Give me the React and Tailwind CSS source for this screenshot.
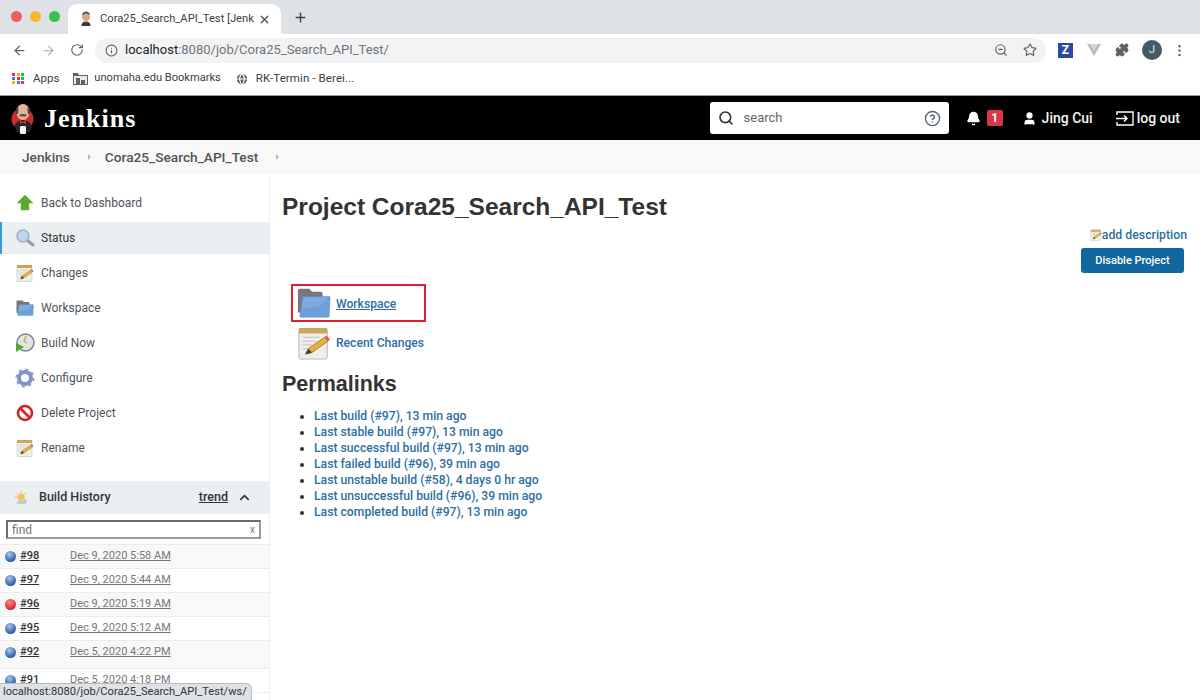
import React from 'react';
import { ArrowLeft, ArrowRight, RotateCw, Info, ZoomOut, Star, Puzzle, MoreVertical, Plus, X, Search, CircleHelp, Bell, User, ChevronUp, Globe } from 'lucide-react';

const FolderIcon = ({ size = 18 }) => (
  <svg width={size} height={size} viewBox="0 0 36 32">
    <path d="M1 3q0-2 2-2h10l3 3h9q2 0 2 2v20H1z" fill="#77777d" />
    <path d="M6 10q0-1 1-1h27q1 0 1 1l-1 20q0 1-1 1H4q-1 0-1-1z" fill="#6e9fd8" stroke="#5b8cc6" strokeWidth=".6" />
    <path d="M7 10h26l-8 9-20 3z" fill="#7fabdf" />
  </svg>
);

const NotepadIcon = ({ size = 18 }) => (
  <svg width={size} height={size} viewBox="0 0 36 36">
    <rect x="2" y="3" width="30" height="32" rx="2" fill="#efefea" stroke="#b5b5ac" />
    <rect x="2" y="2" width="30" height="6" rx="1" fill="#c9a659" />
    <path d="M6 12h18M6 16h14M6 20h10M6 24h8" stroke="#c9c9c2" strokeWidth="1.2" />
    <path d="M9 30l3-6L29 12l4 4-17 12z" fill="#e8b13c" stroke="#8a6a24" strokeWidth=".8" />
    <path d="M29 12l4 4 2-2-4-4z" fill="#dc5f52" />
    <path d="M9 30l3-6 4 4z" fill="#3a3a3a" />
  </svg>
);

const ArrowUpIcon = () => (
  <svg width="18" height="18" viewBox="0 0 18 18">
    <path d="M9 1l8 8h-4v7H5V9H1z" fill="#5aa82c" stroke="#7cc04e" strokeWidth=".6" />
  </svg>
);

const MagnifierIcon = () => (
  <svg width="20" height="20" viewBox="0 0 20 20">
    <path d="M12 12l6 5" stroke="#9a9a9a" strokeWidth="3" strokeLinecap="round" />
    <circle cx="8" cy="8" r="6" fill="#bcd5ee" stroke="#9fb3c8" strokeWidth="1.6" />
  </svg>
);

const BuildNowIcon = () => (
  <svg width="20" height="20" viewBox="0 0 20 20">
    <circle cx="10.5" cy="9.5" r="8.5" fill="#e4e4e4" stroke="#77808c" strokeWidth="1.4" />
    <path d="M11 3l-2 5 3 2" fill="none" stroke="#c9a659" strokeWidth="1.4" />
    <path d="M1 10l8 4-8 5z" fill="#55a82e" />
  </svg>
);

const GearIcon = () => (
  <svg width="20" height="20" viewBox="0 0 20 20">
    <circle cx="10" cy="10" r="6" fill="none" stroke="#7f94c4" strokeWidth="4" />
    <circle cx="10" cy="10" r="8.4" fill="none" stroke="#8ea1cc" strokeWidth="2.4" strokeDasharray="3 3.6" />
  </svg>
);

const NoIcon = () => (
  <svg width="18" height="18" viewBox="0 0 18 18">
    <circle cx="9" cy="9" r="7" fill="#fff" stroke="#d3222a" strokeWidth="2.6" />
    <path d="M4 4l10 10" stroke="#d3222a" strokeWidth="2.6" />
  </svg>
);

const SunCloudIcon = () => (
  <svg width="14" height="14" viewBox="0 0 14 14">
    <circle cx="6" cy="6" r="3.6" fill="#f0c64a" />
    <path d="M6 0v2M0 6h2M1.5 1.5l1.4 1.4M10.500 1.500L9 3" stroke="#e8b83c" strokeWidth="1" />
    <path d="M4 13q-3 0-2.500-2 .5-2 3-1.500Q6 7.500 9 8q3 .5 3 2.500T10 13z" fill="#c9c9c9" />
  </svg>
);

const Ball = ({ color = 'blue' }) => (
  <span
    className={`w-[11px] h-[11px] rounded-full shrink-0 ${
      color === 'red'
        ? 'bg-[radial-gradient(circle_at_40%_30%,#f58a8a,#d9262c_70%)]'
        : 'bg-[radial-gradient(circle_at_40%_30%,#a9c6ea,#2f5fa5_70%)]'
    }`}
  />
);

// butler head over a red disc
const JenkinsLogo = () => (
  <svg width="24" height="32" viewBox="0 0 24 32">
    <circle cx="11.500" cy="17" r="11" fill="#c9302c" />
    <ellipse cx="12" cy="10" rx="6.500" ry="8" fill="#e6b394" />
    <path d="M5 12q-1-5 2-8 1 4 0 8zM19 12q1-5-2-8-1 4 0 8z" fill="#4a4a4a" />
    <path d="M8 13q4-2 8 0-1 2-4 1.500Q9 15 8 13z" fill="#5a4a42" />
    <path d="M3 24q3-6 9-6t9 6l-2 6H6z" fill="#24242c" />
    <path d="M9 18l3 2 3-2v4l-3-1.500L9 22z" fill="#d6322c" />
    <rect x="9" y="24" width="6" height="8" rx="1" fill="#f4f4f4" />
  </svg>
);

const sideLinks = [
  { label: 'Back to Dashboard', icon: <ArrowUpIcon /> },
  { label: 'Status', icon: <MagnifierIcon />, active: true },
  { label: 'Changes', icon: <NotepadIcon /> },
  { label: 'Workspace', icon: <FolderIcon /> },
  { label: 'Build Now', icon: <BuildNowIcon /> },
  { label: 'Configure', icon: <GearIcon /> },
  { label: 'Delete Project', icon: <NoIcon /> },
  { label: 'Rename', icon: <NotepadIcon /> },
];

const builds = [
  { id: '#98', date: 'Dec 9, 2020 5:58 AM' },
  { id: '#97', date: 'Dec 9, 2020 5:44 AM' },
  { id: '#96', date: 'Dec 9, 2020 5:19 AM', color: 'red' },
  { id: '#95', date: 'Dec 9, 2020 5:12 AM' },
  { id: '#92', date: 'Dec 5, 2020 4:22 PM', tall: true },
  { id: '#91', date: 'Dec 5, 2020 4:18 PM' },
];

const permalinks = [
  'Last build (#97), 13 min ago',
  'Last stable build (#97), 13 min ago',
  'Last successful build (#97), 13 min ago',
  'Last failed build (#96), 39 min ago',
  'Last unstable build (#58), 4 days 0 hr ago',
  'Last unsuccessful build (#96), 39 min ago',
  'Last completed build (#97), 13 min ago',
];

const appsColors = ['bg-red-500', 'bg-yellow-500', 'bg-green-500', 'bg-blue-500', 'bg-red-500', 'bg-green-500', 'bg-yellow-500', 'bg-blue-500', 'bg-red-500'];

export default function App() {
  return (
    <div className="relative w-[1200px] h-[700px] overflow-hidden bg-white text-[#333] font-['Roboto',Arial,sans-serif]">
      {/* Tab strip */}
      <div className="h-[34px] bg-[#dee1e6] flex items-end">
        <div className="flex items-center gap-[8px] pl-[11px] w-[68px] h-[34px] pb-[1px]">
          <span className="w-[11px] h-[11px] rounded-full bg-[#ee5f5b] shrink-0" />
          <span className="w-[11px] h-[11px] rounded-full bg-[#f8b62d] shrink-0" />
          <span className="w-[11px] h-[11px] rounded-full bg-[#39c14a] shrink-0" />
        </div>
        <div className="w-[213px] h-[30px] bg-white rounded-t-[9px] flex items-center pl-[10px] pr-[10px]">
          <svg width="16" height="16" viewBox="0 0 24 32" className="shrink-0">
            <ellipse cx="12" cy="11" rx="8" ry="9" fill="#dca583" />
            <path d="M4 9q1-8 8-8t8 7q-4-3-8-3T4 9z" fill="#555" />
            <path d="M3 30q0-9 9-9t9 9z" fill="#33333d" />
            <path d="M9 21l3 3 3-3-1 4h-4z" fill="#c9302c" />
          </svg>
          <span className="ml-[6px] text-[11.200px] text-[#3c4043] whitespace-nowrap">Cora25_Search_API_Test [Jenk</span>
          <X size={13} strokeWidth={2.2} className="ml-auto text-[#444] shrink-0" />
        </div>
        <Plus size={15} strokeWidth={2.2} className="ml-[12px] mb-[9px] text-[#3c4043]" />
      </div>

      {/* Address bar */}
      <div className="h-[31px] pt-[1px] flex items-center pl-[12px]">
        <ArrowLeft size={15} className="text-[#5f6368]" />
        <ArrowRight size={15} className="ml-[14px] text-[#b5b8bc]" />
        <RotateCw size={14} className="ml-[14px] text-[#5f6368]" />
        <div className="ml-[11px] w-[951px] h-[25px] rounded-full bg-[#f1f3f4] flex items-center pl-[10px] pr-[9px]">
          <Info size={13} className="text-[#5f6368]" />
          <span className="ml-[7px] text-[13px] text-[#70757a]">
            <span className="text-[#202124]">localhost</span>:8080/job/Cora25_Search_API_Test/
          </span>
          <ZoomOut size={14} className="ml-auto text-[#5f6368]" />
          <Star size={14} className="ml-[15px] text-[#5f6368]" />
        </div>
        <span className="ml-[12px] w-[15px] h-[15px] bg-[#2e4a9e] text-white text-[12px] font-bold flex items-center justify-center">Z</span>
        <svg width="14" height="12" viewBox="0 0 14 12" className="ml-[14px]">
          <path d="M0 0h14L7 12z" fill="#b8bcba" />
          <path d="M3 0h8L7 7z" fill="#d6d8d6" />
        </svg>
        <Puzzle size={14} className="ml-[14px] text-[#5f6368] fill-[#5f6368]" />
        <span className="ml-[13px] w-[20px] h-[20px] rounded-full bg-[#455a64] text-[#e5e8ea] text-[11px] flex items-center justify-center">J</span>
        <MoreVertical size={15} className="ml-[10px] text-[#5f6368]" />
      </div>

      {/* Bookmarks */}
      <div className="h-[31px] pb-[3px] flex items-center pl-[12px] text-[11.500px] text-[#3c4043] border-b border-[#9a9a9a]">
        <span className="grid grid-cols-3 gap-[1px] w-[13px]">
          {appsColors.map((c, i) => <span key={i} className={`w-[3px] h-[3px] ${c}`} />)}
        </span>
        <span className="ml-[8px]">Apps</span>
        <svg width="15" height="13" viewBox="0 0 15 13" className="ml-[14px]">
          <path d="M0 1h5l1 2h9v10H0z" fill="#5f6368" />
          <path d="M1 4h13v8H1z" fill="#e9eaeb" />
          <path d="M3 6h4v6H3zM8 8h4v4H8z" fill="#5f6368" />
        </svg>
        <span className="ml-[6px] text-[11.100px]">unomaha.edu Bookmarks</span>
        <Globe size={14} className="ml-[14px] text-white fill-[#5f6368]" />
        <span className="ml-[7px] tracking-[0.1px]">RK-Termin - Berei...</span>
      </div>

      {/* Jenkins header */}
      <header className="h-[44px] bg-black flex items-center text-white pr-[20px]">
        <div className="ml-[11px]"><JenkinsLogo /></div>
        <span className="ml-[9px] text-[26px] font-bold font-['Liberation_Serif',Georgia,serif] tracking-[1px]">Jenkins</span>
        <div className="ml-auto w-[239px] h-[32px] bg-white rounded-[3px] flex items-center pl-[8px] pr-[8px] text-[#5c6770]">
          <Search size={16} strokeWidth={2.4} className="text-[#333]" />
          <span className="ml-[10px] text-[13px] text-[#666]">search</span>
          <CircleHelp size={17} className="ml-auto" />
        </div>
        <Bell size={15} className="ml-[17px] fill-white" />
        <span className="ml-[6px] w-[16px] h-[16px] rounded-[2px] bg-[#dc3545] text-[12px] font-bold flex items-center justify-center">1</span>
        <User size={15} className="ml-[19px] fill-white" />
        <span className="ml-[5px] text-[14px] font-medium text-[#f4f4f4]">Jing Cui</span>
        <svg width="18" height="15" viewBox="0 0 18 15" fill="none" stroke="currentColor" strokeWidth="1.4" className="ml-[23px]">
          <path d="M1 4V1h16v13H1v-3M0 7.500h11M8 4.500l3 3-3 3" />
        </svg>
        <span className="ml-[3px] text-[14px] font-medium text-[#f4f4f4]">log out</span>
      </header>

      {/* Breadcrumb */}
      <div className="h-[34px] bg-[#f8f8f8] flex items-center pl-[22px] text-[13.700px] font-medium text-[#4d545d]">
        <span>Jenkins</span>
        <span className="ml-[18px] border-y-[3px] border-l-[3px] border-y-transparent border-l-[#b5b5b5]" />
        <span className="ml-[14px]">Cora25_Search_API_Test</span>
        <span className="ml-[18px] border-y-[3px] border-l-[3px] border-y-transparent border-l-[#b5b5b5]" />
      </div>

      <div className="flex">
        {/* Side panel */}
        <aside className="w-[270px] shrink-0 border-r border-[#f0f0f0] pt-[13px] h-[540px]">
          <nav className="text-[12px] text-[#4d545d] flex flex-col">
            {sideLinks.map((l) => (
              <div
                key={l.label}
                className={`h-[32px] mb-[3px] flex items-center ${l.active ? 'bg-[#eaeff2] border-l-2 border-[#2e9be6] pl-[13px]' : 'pl-[15px]'}`}
              >
                <span className="w-[20px] flex justify-center">{l.icon}</span>
                <span className={`ml-[6px] ${l.active ? 'text-[#333]' : ''}`}>{l.label}</span>
              </div>
            ))}
          </nav>

          <div className="mt-[14px] h-[33px] bg-[#eaeff2] flex items-center pl-[15px] pr-[17px] text-[12.500px] text-[#333]">
            <SunCloudIcon />
            <span className="ml-[10px] font-medium">Build History</span>
            <span className="ml-auto font-medium underline">trend</span>
            <ChevronUp size={15} strokeWidth={2.5} className="ml-[9px]" />
          </div>

          <div className="h-[31px] pt-[1px] flex items-center px-[6px] border-b border-[#ececec]">
            <div className="w-[255px] h-[19px] border-2 border-[#6d6d6d] border-r-[#999] border-b-[#999] flex items-center justify-between px-[4px] text-[12px] text-[#757575]">
              <span>find</span>
              <span className="text-[10px]">x</span>
            </div>
          </div>

          {builds.map((b, i) => (
            <div
              key={b.id}
              className={`flex items-center pl-[5px] text-[11px] border-b border-[#ececec] ${b.tall ? 'h-[28px] pb-[4px]' : 'h-[24px]'} ${i % 2 === 0 ? 'bg-[#f8f8f8]' : 'bg-white'}`}
            >
              <Ball color={b.color} />
              <span className="ml-[4px] w-[50px] font-medium underline text-[#333]">{b.id}</span>
              <span className="underline text-[#767676]">{b.date}</span>
            </div>
          ))}
        </aside>

        {/* Main panel */}
        <main className="flex-1 relative pl-[12px] pr-[13px]">
          <h1 className="pt-[17px] text-[24.500px] leading-[32px] font-bold text-[#333] font-['Liberation_Sans',Arial,sans-serif]">Project Cora25_Search_API_Test</h1>

          <div className="mt-[3px] flex flex-col items-end">
            <div className="flex items-center text-[12.300px] font-medium text-[#2d6ea3]">
              <NotepadIcon size={12} />
              <span>add description</span>
            </div>
            <button className="mt-[4px] mr-[3px] w-[103px] h-[25px] rounded-[3px] bg-[#11689f] text-white text-[11px] font-medium">Disable Project</button>
          </div>

          <div className="mt-[11px] ml-[9px] w-[135px] h-[38px] border-2 border-[#e5202a] flex items-center pl-[4px]">
            <FolderIcon size={34} />
            <span className="ml-[5px] mt-[2px] text-[12.100px] font-medium text-[#2d6ea3] underline">Workspace</span>
          </div>
          <div className="mt-[3px] ml-[15px] h-[36px] flex items-center">
            <NotepadIcon size={34} />
            <span className="ml-[5px] text-[12.100px] font-medium text-[#2d6ea3]">Recent Changes</span>
          </div>

          <h2 className="mt-[9px] text-[21.500px] leading-[28px] font-bold text-[#333] font-['Liberation_Sans',Arial,sans-serif]">Permalinks</h2>

          <ul className="mt-[10px] pl-[32px] list-disc text-[12.200px] leading-[16px] font-medium text-[#2d6ea3] marker:text-[#333]">
            {permalinks.map((p) => <li key={p}>{p}</li>)}
          </ul>
        </main>
      </div>

      {/* Status bubble */}
      <div className="absolute left-0 bottom-0 w-[252px] h-[17px] bg-[#dee1e6] rounded-tr-[6px] border-t border-r border-[#b8bcc2] flex items-center pl-[3px] text-[11.100px] text-[#333]">
        localhost:8080/job/Cora25_Search_API_Test/ws/
      </div>
    </div>
  );
}
